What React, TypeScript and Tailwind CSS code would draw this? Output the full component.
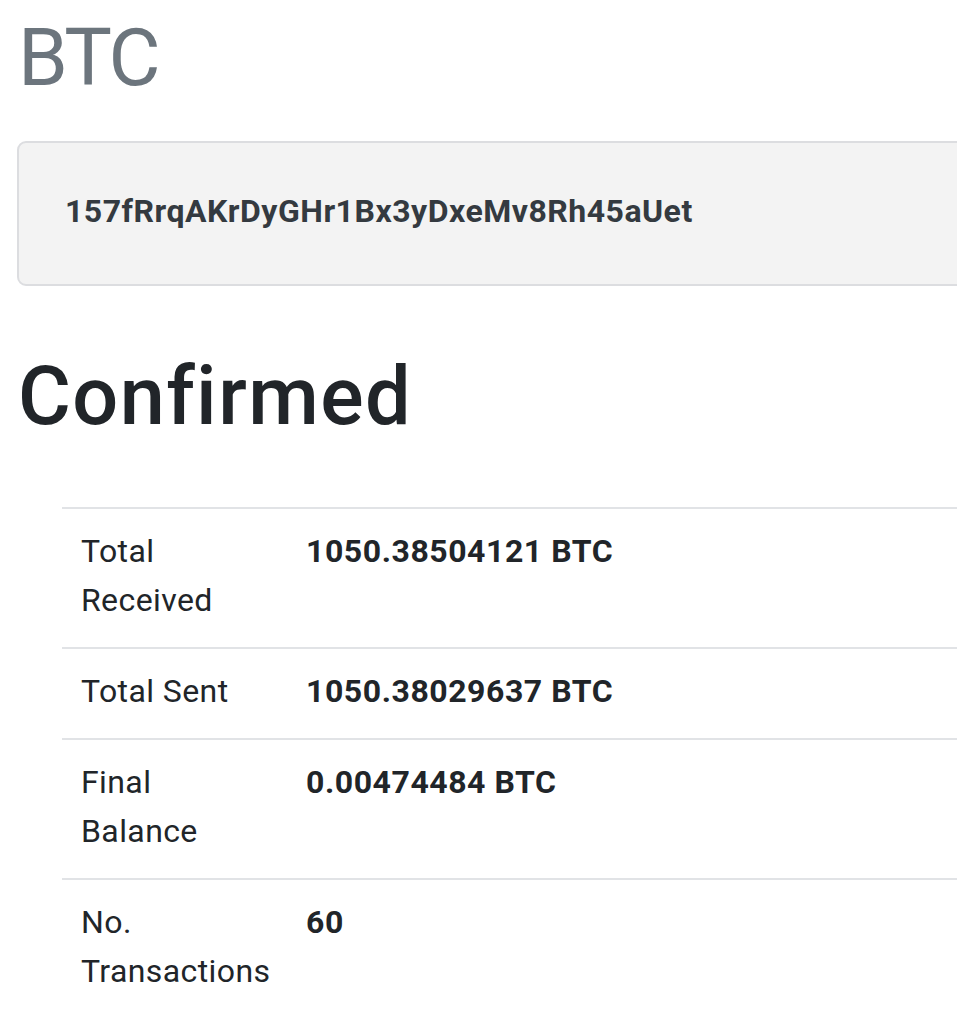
import React from "react";

const rows = [
  { label: "Total Received", value: "1050.38504121 BTC" },
  { label: "Total Sent", value: "1050.38029637 BTC" },
  { label: "Final Balance", value: "0.00474484 BTC" },
  { label: "No. Transactions", value: "60" },
];

export default function App() {
  return (
    <div className="w-[957px] h-[1017px] overflow-hidden bg-white font-['Roboto',sans-serif]">
      <h1 className="pt-[10px] pl-[18px] text-[80px] leading-[96px] font-normal tracking-[-2.5px] text-[#6c757d]">
        BTC
      </h1>

      <div className="mt-[35px] ml-[17px] mr-[-20px] h-[145px] rounded-[9px] border-2 border-[#dcdde0] bg-[#f3f3f3] pt-[44px] pl-[46px]">
        <h5 className="text-[32px] leading-[48px] font-bold tracking-[0.5px] text-[#343a40]">
          157fRrqAKrDyGHr1Bx3yDxeMv8Rh45aUet
        </h5>
      </div>

      <h2 className="mt-[63px] pl-[18px] text-[81px] leading-[96px] font-medium tracking-[1.4px] text-[#212529]">
        Confirmed
      </h2>

      <div className="mt-[62px] ml-[62px] mr-[-20px]">
        {rows.map((row) => (
          <div
            key={row.label}
            className="grid grid-cols-[225px_1fr] border-t-2 border-[#e1e3e6] pt-[18px] pb-[22px] text-[32px] leading-[49px] text-[#212529]"
          >
            <div className="pl-[19px] pr-[20px] tracking-[0.4px]">{row.label}</div>
            <div className="pl-[19px] font-bold tracking-[0.55px]">{row.value}</div>
          </div>
        ))}
      </div>
    </div>
  );
}
